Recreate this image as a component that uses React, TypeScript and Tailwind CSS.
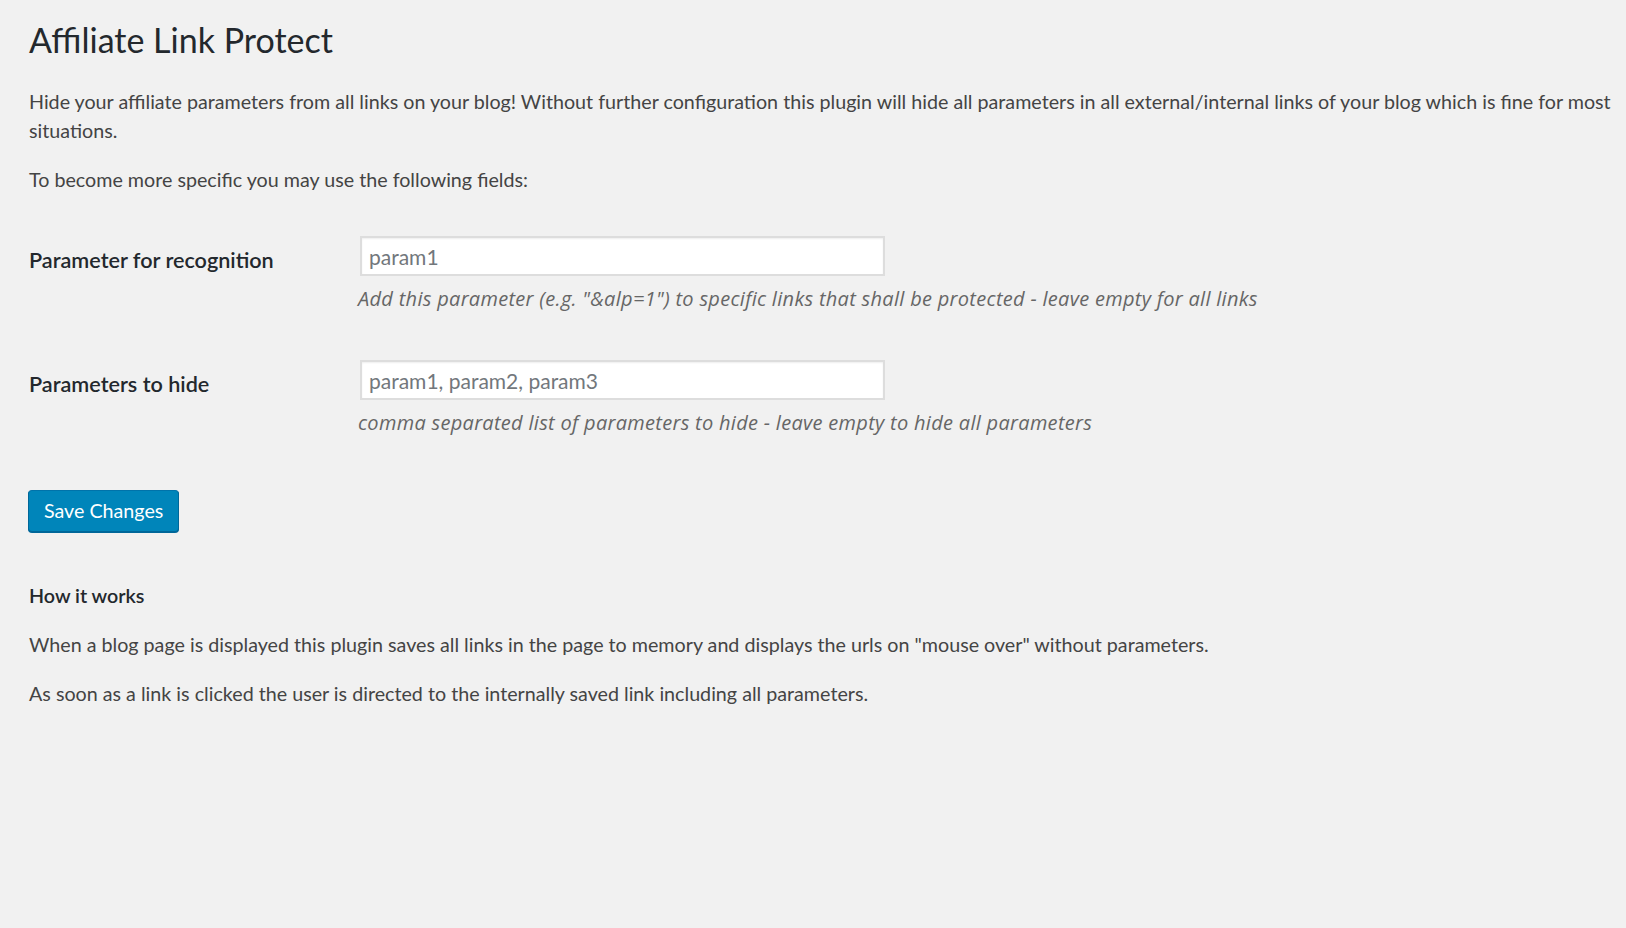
export default function App() {
  return (
    <div
      className="min-h-screen w-full bg-[#f1f1f1] pl-[29px] pt-[17px] text-[#444444]"
      style={{ fontFamily: 'Lato, "Open Sans", sans-serif' }}
    >
      <h1 className="m-0 text-[34px] font-normal leading-[45px] text-[#23282d]">Affiliate Link Protect</h1>

      <p className="mt-[25px] text-[19.7px] leading-[29px]">
        Hide your affiliate parameters from all links on your blog! Without further configuration this plugin will hide
        all parameters in all external/internal links of your blog which is fine for most situations.
      </p>
      <p className="mt-[20px] text-[19.7px] leading-[29px]">To become more specific you may use the following fields:</p>

      <form className="mt-[42px]" onSubmit={(e) => e.preventDefault()}>
        <div className="flex">
          <label className="w-[329px] shrink-0 pt-[10px] text-[21.6px] font-semibold leading-[28px] text-[#23282d]">
            Parameter for recognition
          </label>
          <div>
            <input
              type="text"
              placeholder="param1"
              className="ml-[2px] block h-[40px] w-[525px] border-2 border-[#dddddd] bg-white px-[7px] text-[21px] text-[#32373c] shadow-[inset_0_1px_2px_rgba(0,0,0,0.07)] outline-none placeholder:text-[#72777c]"
            />
            <p
              className="mt-[9px] text-[20px] italic leading-[28px] tracking-[0.3px] text-[#666666]"
              style={{ fontFamily: '"Open Sans", Lato, sans-serif' }}
            >
              Add this parameter (e.g. "&amp;alp=1") to specific links that shall be protected - leave empty for all links
            </p>
          </div>
        </div>

        <div className="mt-[47px] flex">
          <label className="w-[329px] shrink-0 pt-[10px] text-[21.6px] font-semibold leading-[28px] text-[#23282d]">
            Parameters to hide
          </label>
          <div>
            <input
              type="text"
              placeholder="param1, param2, param3"
              className="ml-[2px] block h-[40px] w-[525px] border-2 border-[#dddddd] bg-white px-[7px] text-[21px] text-[#32373c] shadow-[inset_0_1px_2px_rgba(0,0,0,0.07)] outline-none placeholder:text-[#72777c]"
            />
            <p
              className="mt-[9px] text-[20px] italic leading-[28px] tracking-[0.3px] text-[#666666]"
              style={{ fontFamily: '"Open Sans", Lato, sans-serif' }}
            >
              comma separated list of parameters to hide - leave empty to hide all parameters
            </p>
          </div>
        </div>

        <button
          type="submit"
          className="-ml-[1px] mt-[53px] h-[42px] rounded-[4px] border border-[#006799] border-t-[#0073aa] bg-[#0085ba] px-[15px] text-[19.7px] leading-none text-white shadow-[0_1px_0_#006799]"
        >
          Save Changes
        </button>
      </form>

      <h2 className="mt-[50px] text-[19.7px] font-semibold leading-[28px] text-[#23282d]">How it works</h2>
      <p className="mt-[20px] text-[19.7px] leading-[29px]">
        When a blog page is displayed this plugin saves all links in the page to memory and displays the urls on "mouse
        over" without parameters.
      </p>
      <p className="mt-[20px] text-[19.7px] leading-[29px]">
        As soon as a link is clicked the user is directed to the internally saved link including all parameters.
      </p>
    </div>
  );
}
